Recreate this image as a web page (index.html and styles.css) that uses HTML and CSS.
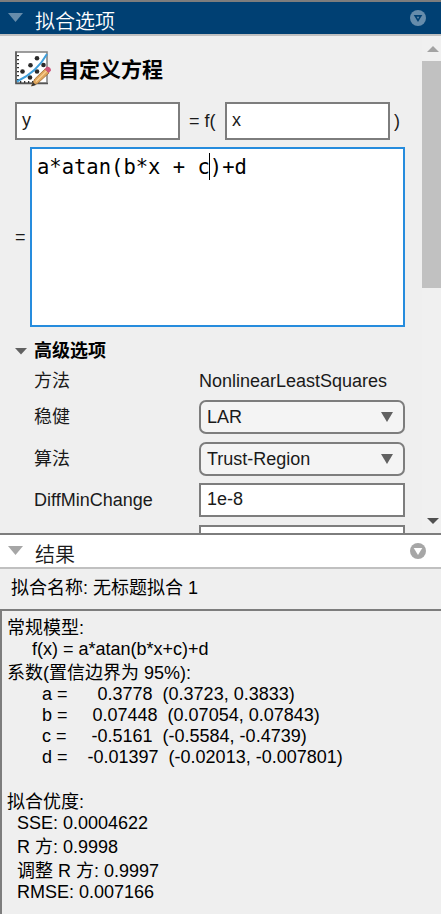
FILE: index.html
```html
<!DOCTYPE html>
<html lang="zh-CN">
<head>
<meta charset="utf-8">
<title>拟合选项</title>
<link rel="stylesheet" href="styles.css">
</head>
<body>
<section class="options">
  <header class="bar bar-active">
    <svg class="fold" width="15" height="9" viewBox="0 0 15 9"><path d="M0 0h15L7.5 9z"/></svg>
    <h2>拟合选项</h2>
    <svg class="menu" width="16" height="16" viewBox="0 0 16 16"><circle class="disc" cx="8" cy="8" r="8"/><path class="mark" d="M3.7 5h8.6L8 12z"/><path class="disc" d="M6.7 6.7h2.6L8 9z"/></svg>
  </header>
  <div class="scroller">
    <div class="form">
      <div class="title">
        <svg width="37" height="37" viewBox="0 0 37 37">
          <rect x="1" y="1" width="31" height="31" fill="#fff" stroke="#858585" stroke-width="1.6"/>
          <path d="M1 .5V32.5H33" fill="none" stroke="#555" stroke-width="1.5"/>
          <path d="M3 4v27" fill="none" stroke="#333" stroke-width="2" stroke-dasharray="1.3 2.7"/>
          <path d="M5 31h16" fill="none" stroke="#333" stroke-width="2" stroke-dasharray="1.3 2.7"/>
          <g fill="#2b2b2b"><circle cx="22" cy="7.3" r="2.3"/><circle cx="15.5" cy="14.3" r="2.3"/><circle cx="28.5" cy="14" r="2.3"/><circle cx="7.5" cy="20.5" r="2.3"/><circle cx="22" cy="20.5" r="2.3"/><circle cx="15" cy="26.5" r="2.3"/></g>
          <path d="M2 30.500Q22 21 32 3" fill="none" stroke="#3f9fdb" stroke-width="2"/>
          <path d="M16.500 35l3.200-7L30 18l4 4-11.500 10.500z" fill="#e0a65c" stroke="#9c6b32" stroke-width=".8"/>
          <path d="M21 30.500L31.500 20" stroke="#f6cf91" stroke-width="1.4"/>
          <path d="M16.500 35.300l1.500-4 3 2.600z" fill="#333"/>
          <path d="M29.500 18l2.500-2.500q4 .5 4 4L33.800 22z" fill="#cf5579"/>
        </svg>
        <h1>自定义方程</h1>
      </div>
      <div class="signature">
        <div class="field">y</div><span class="eqf">= f(</span><div class="field">x</div><span class="close">)</span>
      </div>
      <div class="equation">
        <span class="equals">=</span>
        <div class="editor">a*atan(b*x + c<i class="caret"></i>)+d</div>
      </div>
      <div class="advanced">
        <svg width="12" height="7" viewBox="0 0 12 7"><path d="M0 0h12L6 6.500z" fill="#616161"/></svg>
        <h3>高级选项</h3>
      </div>
      <div class="grid">
        <label>方法</label><span class="value">NonlinearLeastSquares</span>
        <label>稳健</label><div class="select">LAR<svg width="12" height="10" viewBox="0 0 12 10"><path d="M0 0h12L6 10z"/></svg></div>
        <label>算法</label><div class="select">Trust-Region<svg width="12" height="10" viewBox="0 0 12 10"><path d="M0 0h12L6 10z"/></svg></div>
        <label>DiffMinChange</label><div class="number">1e-8</div>
        <label></label><div class="number"></div>
      </div>
    </div>
    <div class="scrollbar">
      <svg width="12" height="6" viewBox="0 0 12 6"><path d="M6 0l6 6H0z" fill="#a3a3a3"/></svg>
      <div class="thumb"></div>
      <svg class="down" width="12" height="6" viewBox="0 0 12 6"><path d="M0 0h12L6 6z" fill="#505050"/></svg>
    </div>
  </div>
</section>
<section class="results">
  <header class="bar">
    <svg class="fold" width="15" height="9" viewBox="0 0 15 9"><path d="M0 0h15L7.500 9z"/></svg>
    <h2>结果</h2>
    <svg class="menu" width="16" height="16" viewBox="0 0 16 16"><circle class="disc" cx="8" cy="8" r="8"/><path class="mark" d="M3.700 5h8.600L8 12z"/></svg>
  </header>
  <div class="name">拟合名称: 无标题拟合 1</div>
  <div class="output">
    <div class="line han">常规模型:</div>
    <div class="line">     f(x) = a*atan(b*x+c)+d</div>
    <div class="line han">系数(置信边界为 95%):</div>
    <div class="line">       a =      0.3778  (0.3723, 0.3833)</div>
    <div class="line">       b =     0.07448  (0.07054, 0.07843)</div>
    <div class="line">       c =     -0.5161  (-0.5584, -0.4739)</div>
    <div class="line">       d =    -0.01397  (-0.02013, -0.007801)</div>
    <div class="line"></div>
    <div class="line han">拟合优度:</div>
    <div class="line">  SSE: 0.0004622</div>
    <div class="line han">  R 方: 0.9998</div>
    <div class="line han">  调整 R 方: 0.9997</div>
    <div class="line">  RMSE: 0.007166</div>
  </div>
</section>
</body>
</html>
```
FILE: styles.css
```css
* { box-sizing: border-box; }
body {
  margin: 0;
  height: 914px;
  display: flex;
  flex-direction: column;
  overflow: hidden;
  background: #efefef;
  color: #1a1a1a;
  font: 18px/21px "Liberation Sans", "Noto Sans CJK SC", sans-serif;
}
h1, h2, h3 { margin: 0; color: #000; }
svg { display: block; flex: none; }

.options {
  height: 535px;
  display: flex;
  flex-direction: column;
  border-top: 2px solid #7d7d7d;
  border-bottom: 2px solid #7d7d7d;
}
.bar {
  flex: none;
  height: 34px;
  display: flex;
  align-items: center;
  padding: 0 15px 0 8px;
  background: #fff;
  border-bottom: 2px solid #c0c0c0;
}
.bar h2 {
  flex: 1;
  padding: 8px 0 0 12px;
  font-size: 20px;
  font-weight: 350;
  line-height: 24px;
  color: #1a1a1a;
}
.bar .fold { margin-bottom: 1px; fill: #a6a6a6; }
.disc { fill: #a6a6a6; }
.mark { fill: #fff; }
.bar-active { background: #004073; }
.bar-active h2 { color: #fff; }
.bar-active .fold, .bar-active .disc { fill: #668cab; }
.bar-active .mark { fill: #004073; }

.scroller { flex: 1; min-height: 0; display: flex; overflow: hidden; }
.form { width: 422px; padding: 15px 17px 0 15px; flex: none; }
.title { display: flex; height: 37px; gap: 6px; }
.title h1 { font-size: 21px; line-height: 37px; }
.signature { display: flex; align-items: center; margin-top: 14px; }
.field {
  width: 165px;
  height: 38px;
  padding: 0 5px;
  border: 2px solid #7d7d7d;
  background: #fff;
  line-height: 33px;
}
.eqf { width: 45px; padding-left: 9px; white-space: nowrap; }
.close { padding-left: 4px; }
.equation { display: flex; align-items: center; margin-top: 7px; }
.equals { width: 15px; }
.editor {
  width: 375px;
  height: 180px;
  padding: 4px 5px;
  border: 2px solid #268cdd;
  background: #fff;
  color: #000;
  font: 20.500px/28px "DejaVu Sans Mono", monospace;
  white-space: pre;
}
.caret {
  display: inline-block;
  width: 1px;
  height: 27px;
  margin: 0 0 0 -1px;
  vertical-align: -6px;
  background: #000;
}
.advanced { display: flex; align-items: center; gap: 7px; height: 22px; margin-top: 13px; }
.advanced h3 { font-size: 18px; line-height: 22px; }
.grid {
  display: grid;
  grid-template-columns: 165px 206px;
  grid-template-rows: 38px 42px 41px 42px 34px;
  align-items: start;
  margin-left: 19px;
}
.grid label { line-height: 34px; }
.grid > :nth-child(-n+2) { line-height: 38px; }
.select, .number {
  height: 34px;
  padding: 0 10px 0 6px;
  border: 2px solid #7d7d7d;
  line-height: 29px;
}
.select {
  display: flex;
  align-items: center;
  justify-content: space-between;
  border-radius: 7px;
  background: #f4f4f4;
}
.select svg { fill: #616161; margin-bottom: 1px; }
.number { background: #fff; }
.scrollbar {
  flex: 1;
  display: flex;
  flex-direction: column;
  align-items: center;
  padding: 10px 0 9px;
  background: #f0f0f0;
}
.scrollbar svg { margin-left: 2px; }
.thumb { align-self: stretch; height: 227px; margin-top: 9px; background: #c1c1c1; }
.scrollbar .down { margin-top: auto; }

.results { flex: 1; display: flex; flex-direction: column; }
.name {
  height: 40px;
  padding-left: 11px;
  line-height: 39px;
  color: #000;
}
.output {
  flex: 1;
  padding: 4px 0 0 5px;
  border-top: 2px solid #7d7d7d;
  border-left: 2px solid #7d7d7d;
  color: #000;
}
.line { height: 21px; white-space: pre; }
.line.han { height: 24px; padding-top: 3px; }
```
